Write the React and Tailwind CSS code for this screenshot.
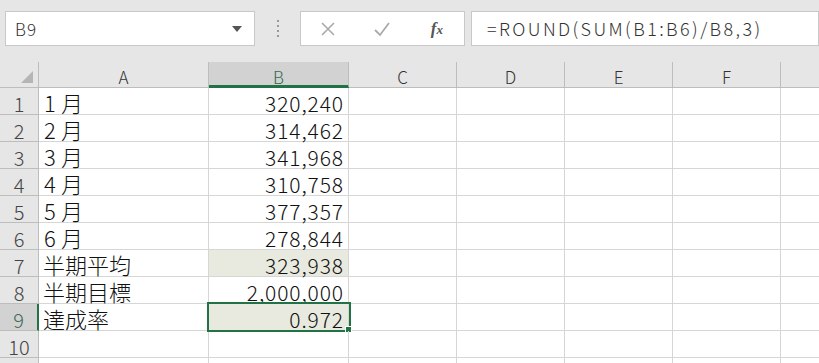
import React from "react";

const rows = [
  ["1", "月", "320,240"],
  ["2", "月", "314,462"],
  ["3", "月", "341,968"],
  ["4", "月", "310,758"],
  ["5", "月", "377,357"],
  ["6", "月", "278,844"],
  ["", "半期平均", "323,938"],
  ["", "半期目標", "2,000,000"],
  ["", "達成率", "0.972"],
  ["", "", ""],
  ["", "", ""],
];

const font = { fontFamily: '"Noto Sans CJK JP", "Noto Sans", sans-serif' };

const colHead = "bg-[#e6e6e6] border-r border-b border-[#bdbdbd] flex items-center justify-center pt-[4px] text-[17px] leading-none font-light text-[#333]";

export default function App() {
  return (
    <div className="w-[819px] h-[363px] overflow-hidden bg-white flex flex-col" style={font}>
      {/* formula bar */}
      <div className="h-[62px] bg-[#e6e6e6] flex items-start pt-[11px] pl-[5px] shrink-0">
        <div className="w-[250px] h-[35px] bg-white border border-[#c8c8c8] flex items-center pl-[9px] pr-[12px]">
          <span className="text-[17px] text-[#333] font-light tracking-[1px]">B9</span>
          <div className="ml-auto w-0 h-0 border-l-[5px] border-r-[5px] border-t-[6px] border-l-transparent border-r-transparent border-t-[#555]"></div>
        </div>
        <div className="w-[45px] h-[35px] flex flex-col items-center justify-center gap-[3px]">
          <div className="w-[2px] h-[2px] bg-[#999]"></div>
          <div className="w-[2px] h-[2px] bg-[#999]"></div>
          <div className="w-[2px] h-[2px] bg-[#999]"></div>
          <div className="w-[2px] h-[2px] bg-[#999]"></div>
        </div>
        <div className="w-[165px] h-[35px] bg-white border border-[#c8c8c8] flex items-center">
          <div className="w-[55px] flex justify-center">
            <svg width="16" height="16" viewBox="0 0 16 16">
              <path d="M2 2 L14 14 M14 2 L2 14" stroke="#aaa" strokeWidth="1.6" fill="none" />
            </svg>
          </div>
          <div className="w-[55px] flex justify-center">
            <svg width="18" height="16" viewBox="0 0 18 16">
              <path d="M2 9 L7 14 L16 2" stroke="#aaa" strokeWidth="1.8" fill="none" />
            </svg>
          </div>
          <div className="w-[55px] flex justify-center">
            <span className="text-[17px] italic text-[#555] font-bold" style={{ fontFamily: '"Liberation Serif", serif' }}>
              f<span className="text-[13px]">x</span>
            </span>
          </div>
        </div>
        <div className="ml-[6px] flex-1 h-[35px] bg-white border border-[#c8c8c8] flex items-center pl-[15px]">
          <span className="text-[18px] text-[#333] font-light tracking-[2.4px]">=ROUND(SUM(B1:B6)/B8,3)</span>
        </div>
      </div>

      {/* grid */}
      <div className="grid grid-cols-[39px_170px_140px_108px_108px_108px_108px_1fr] grid-rows-[26px_repeat(11,27px)] flex-1">
        {/* header row */}
        <div className="bg-[#e6e6e6] border-r border-b border-[#bdbdbd] relative">
          <div className="absolute right-[5px] bottom-[4px] w-0 h-0 border-l-[12px] border-t-[12px] border-l-transparent border-t-transparent border-b-0 border-r-[12px] border-r-[#b5b5b5]"></div>
        </div>
        <div className={colHead}>A</div>
        <div className="bg-[#d2d2d2] border-r border-[#bdbdbd] border-b-[3px] border-b-[#217346] flex items-center justify-center pt-[6px] text-[17px] leading-none font-light text-[#2f6b50]">B</div>
        <div className={colHead}>C</div>
        <div className={colHead}>D</div>
        <div className={colHead}>E</div>
        <div className={colHead}>F</div>
        <div className="bg-[#e6e6e6] border-b border-[#bdbdbd]"></div>

        {rows.map((r, i) => {
          const sel = i === 8;
          return (
            <React.Fragment key={i}>
              <div
                className={
                  sel
                    ? "bg-[#d2d2d2] border-b border-[#bdbdbd] border-r-[2px] border-r-[#217346] flex items-center justify-center pt-[5px] text-[20px] leading-none font-light text-[#3f6b55]"
                    : "bg-[#e6e6e6] border-r border-b border-[#bdbdbd] flex items-center justify-center pt-[5px] text-[20px] leading-none font-light text-[#444]"
                }
              >
                {i < 10 ? i + 1 : ""}
              </div>
              <div className="border-r border-b border-[#d6d6d6] flex items-center pt-[2px] pl-[4px] text-[22px] leading-none font-light text-[#111] whitespace-nowrap">
                {r[0] && <span className="inline-block w-[18px] pl-[1px]">{r[0]}</span>}
                <span>{r[1]}</span>
              </div>
              <div
                className={
                  (i === 6 || sel ? "bg-[#e9eadf] " : "") +
                  "border-r border-b border-[#d6d6d6] flex items-center justify-end pt-[4px] pr-[4px] text-[21px] leading-none font-light text-[#111] tracking-[0.9px] relative"
                }
              >
                {r[2]}
                {sel && (
                  <>
                    <div className="absolute left-[-2px] top-[-2px] right-[-3px] bottom-[-2px] border-[2px] border-[#217346]"></div>
                    <div className="absolute right-[-4px] bottom-[-3px] w-[7px] h-[7px] bg-[#217346] border border-white"></div>
                  </>
                )}
              </div>
              <div className="border-r border-b border-[#d6d6d6]"></div>
              <div className="border-r border-b border-[#d6d6d6]"></div>
              <div className="border-r border-b border-[#d6d6d6]"></div>
              <div className="border-r border-b border-[#d6d6d6]"></div>
              <div className="border-b border-[#d6d6d6]"></div>
            </React.Fragment>
          );
        })}
      </div>
    </div>
  );
}
